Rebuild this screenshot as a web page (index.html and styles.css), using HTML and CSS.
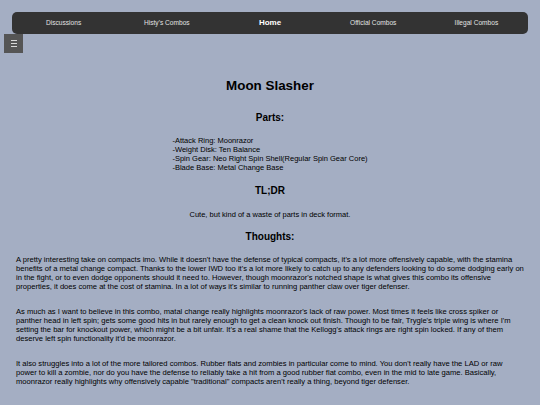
FILE: index.html
```html
<!DOCTYPE html>
<html>
<head>
<meta charset="utf-8">
<link rel="stylesheet" href="styles.css">
</head>
<body>
<nav class="topnav">
  <a class="nav-item">Discussions</a>
  <a class="nav-item">Histy's Combos</a>
  <a class="nav-item active">Home</a>
  <a class="nav-item">Official Combos</a>
  <a class="nav-item">Illegal Combos</a>
</nav>
<button class="menu-btn" aria-label="menu"><span></span><span></span><span></span></button>
<main class="content">
  <h1 class="title">Moon Slasher</h1>
  <h2 class="heading heading-parts">Parts:</h2>
  <div class="parts-wrap">
    <ul class="parts">
      <li>-Attack Ring: Moonrazor</li>
      <li>-Weight Disk: Ten Balance</li>
      <li>-Spin Gear: Neo Right Spin Shell(Regular Spin Gear Core)</li>
      <li>-Blade Base: Metal Change Base</li>
    </ul>
  </div>
  <h2 class="heading heading-tldr">TL;DR</h2>
  <p class="tldr">Cute, but kind of a waste of parts in deck format.</p>
  <h2 class="heading heading-thoughts">Thoughts:</h2>
  <p class="para">A pretty interesting take on compacts imo. While it doesn't have the defense of typical compacts, it's a lot more offensively capable, with the stamina<br>benefits of a metal change compact. Thanks to the lower IWD too it's a lot more likely to catch up to any defenders looking to do some dodging early on<br>in the fight, or to even dodge opponents should it need to. However, though moonrazor's notched shape is what gives this combo its offensive<br>properties, it does come at the cost of stamina. In a lot of ways it's similar to running panther claw over tiger defenser.</p>
  <p class="para">As much as I want to believe in this combo, matal change really highlights moonrazor's lack of raw power. Most times it feels like cross spiker or<br>panther head in left spin; gets some good hits in but rarely enough to get a clean knock out finish. Though to be fair, Trygle's triple wing is where I'm<br>setting the bar for knockout power, which might be a bit unfair. It's a real shame that the Kellogg's attack rings are right spin locked. If any of them<br>deserve left spin functionality it'd be moonrazor.</p>
  <p class="para">It also struggles into a lot of the more tailored combos. Rubber flats and zombies in particular come to mind. You don't really have the LAD or raw<br>power to kill a zombie, nor do you have the defense to reliably take a hit from a good rubber flat combo, even in the mid to late game. Basically,<br>moonrazor really highlights why offensively capable "traditional" compacts aren't really a thing, beyond tiger defenser.</p>
</main>
</body>
</html>
```

FILE: styles.css
```css
html, body {
  margin: 0;
  padding: 0;
}

body {
  background: #a4aec3;
  font-family: "Liberation Sans", Arial, sans-serif;
  color: #000;
  width: 540px;
  height: 405px;
  overflow: hidden;
}

.topnav {
  display: flex;
  align-items: center;
  margin: 12px 12px 0 12px;
  height: 22px;
  background: #333333;
  border-radius: 5px;
}

.nav-item {
  flex: 1;
  text-align: center;
  color: #e2e2e2;
  font-size: 6.6px;
  line-height: 22px;
}

.nav-item.active {
  color: #ffffff;
  font-weight: bold;
  font-size: 8px;
}

.menu-btn {
  display: flex;
  flex-direction: column;
  align-items: center;
  justify-content: center;
  gap: 1.7px;
  width: 19px;
  height: 19px;
  margin: 0 0 0 4px;
  padding: 0;
  border: none;
  background: #555555;
}

.menu-btn span {
  display: block;
  width: 6px;
  height: 1px;
  background: #d8d8d8;
}

.content {
  padding: 0 16px;
}

.title {
  margin: 25px 0 0 0;
  text-align: center;
  font-size: 13.4px;
  line-height: 16px;
  font-weight: bold;
}

.heading {
  margin: 0;
  text-align: center;
  font-size: 10px;
  line-height: 12px;
  font-weight: bold;
}

.heading-parts {
  margin-top: 17.5px;
}

.parts-wrap {
  text-align: center;
  margin-top: 12px;
}

.parts {
  display: inline-block;
  list-style: none;
  margin: 0;
  padding: 0;
  text-align: left;
  font-size: 7.5px;
  line-height: 9px;
}

.heading-tldr {
  margin-top: 11.5px;
}

.tldr {
  margin: 12.5px 0 0 0;
  text-align: center;
  font-size: 7.5px;
  line-height: 9px;
}

.heading-thoughts {
  margin-top: 12px;
}

.para {
  margin: 12px 0 0 0;
  font-size: 7.6px;
  line-height: 9px;
  white-space: nowrap;
}

.para + .para {
  margin-top: 16px;
}
```
